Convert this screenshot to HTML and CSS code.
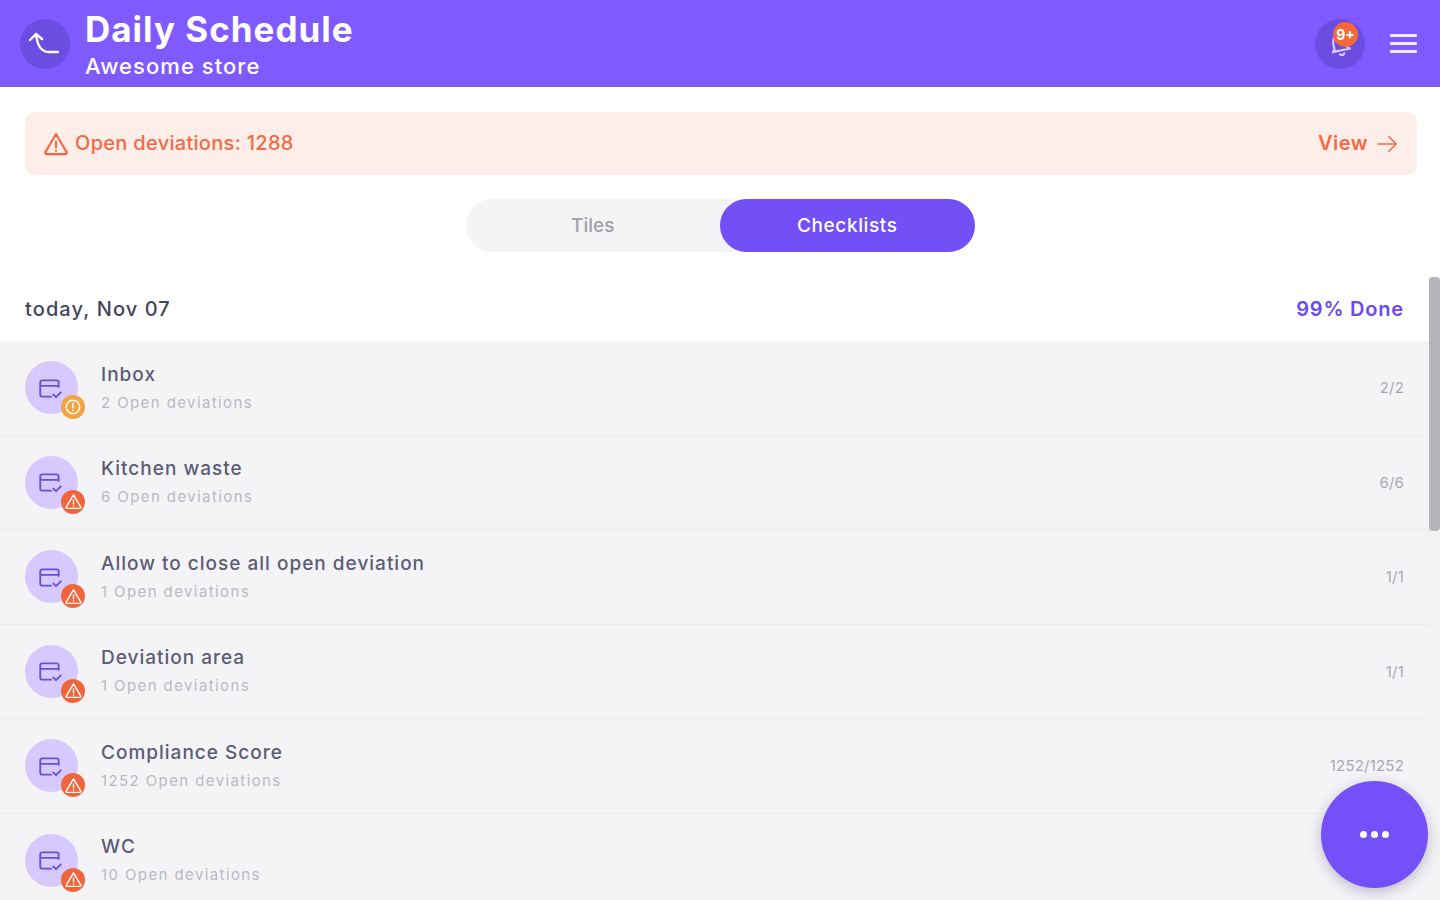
FILE: index.html
```html
<!DOCTYPE html>
<html lang="en">
<head>
  <meta charset="UTF-8">
  <meta name="viewport" content="width=device-width, initial-scale=1.0">
  <title>Daily Schedule</title>
  <link rel="stylesheet" href="styles.css">
</head>
<body>
  <svg class="defs" width="0" height="0">
    <symbol id="checklist" viewBox="0 0 24 24">
      <path d="M20 11V7a2 2 0 0 0-2-2H5a2 2 0 0 0-2 2v11a2 2 0 0 0 2 2h8M3 10h17M15 18l2.5 2.5L22 16" fill="none" stroke="currentColor" stroke-width="1.7" stroke-linecap="round" stroke-linejoin="round"/>
    </symbol>
    <symbol id="warning" viewBox="0 0 24 24">
      <path d="M12 3.5 2.8 19.2a1 1 0 0 0 .9 1.5h16.6a1 1 0 0 0 .9-1.5zM12 10v5M12 17.6v.4" fill="none" stroke="currentColor" stroke-width="1.8" stroke-linecap="round" stroke-linejoin="round"/>
    </symbol>
  </svg>

  <header class="topbar">
    <button class="round-btn back">
      <svg width="32" height="32" viewBox="0 0 32 32"><path d="M1 12l6-6 6 5M7 6c1 10 5 18 13 18h9" fill="none" stroke="#fff" stroke-width="2.400" stroke-linecap="round" stroke-linejoin="round"/></svg>
    </button>
    <div class="titles">
      <h1>Daily Schedule</h1>
      <p>Awesome store</p>
    </div>
    <button class="round-btn bell">
      <svg class="bell-icon" width="26" height="26" viewBox="0 0 24 24"><path d="M6 16V10a6 6 0 0 1 12 0v6l2 2H4zM10 20.500a2 2 0 0 0 4 0" fill="none" stroke="#d9ccff" stroke-width="2" stroke-linejoin="round"/></svg>
      <span class="count">9+</span>
    </button>
    <button class="menu"><span></span><span></span><span></span></button>
  </header>

  <div class="alert">
    <svg class="alert-icon" width="28" height="28"><use href="#warning"/></svg>
    <span class="alert-text">Open deviations: 1288</span>
    <span class="alert-view">View</span>
    <svg width="22" height="22" viewBox="0 0 24 24"><path d="M2 12h20M14 4l8 8-8 8" fill="none" stroke="currentColor" stroke-width="1.600" stroke-linecap="round" stroke-linejoin="round"/></svg>
  </div>

  <div class="toggle">
    <button class="toggle-item">Tiles</button>
    <button class="toggle-item active">Checklists</button>
  </div>

  <main class="content">
    <div class="day-row">
      <span class="day">today, Nov 07</span>
      <span class="done">99% Done</span>
    </div>

    <div class="row">
      <div class="avatar"><svg width="26" height="26"><use href="#checklist"/></svg><span class="badge orange"><svg width="18" height="18" viewBox="0 0 24 24"><circle cx="12" cy="12" r="9" fill="none" stroke="#fff" stroke-width="2"/><path d="M12 7v6M12 16v1" stroke="#fff" stroke-width="2" stroke-linecap="round"/></svg></span></div>
      <div class="info"><div class="name">Inbox</div><div class="sub">2 Open deviations</div></div>
      <div class="ratio">2/2</div>
    </div>
    <div class="row">
      <div class="avatar"><svg width="26" height="26"><use href="#checklist"/></svg><span class="badge"><svg width="19" height="19"><use href="#warning"/></svg></span></div>
      <div class="info"><div class="name">Kitchen waste</div><div class="sub">6 Open deviations</div></div>
      <div class="ratio">6/6</div>
    </div>
    <div class="row">
      <div class="avatar"><svg width="26" height="26"><use href="#checklist"/></svg><span class="badge"><svg width="19" height="19"><use href="#warning"/></svg></span></div>
      <div class="info"><div class="name">Allow to close all open deviation</div><div class="sub">1 Open deviations</div></div>
      <div class="ratio">1/1</div>
    </div>
    <div class="row">
      <div class="avatar"><svg width="26" height="26"><use href="#checklist"/></svg><span class="badge"><svg width="19" height="19"><use href="#warning"/></svg></span></div>
      <div class="info"><div class="name">Deviation area</div><div class="sub">1 Open deviations</div></div>
      <div class="ratio">1/1</div>
    </div>
    <div class="row">
      <div class="avatar"><svg width="26" height="26"><use href="#checklist"/></svg><span class="badge"><svg width="19" height="19"><use href="#warning"/></svg></span></div>
      <div class="info"><div class="name">Compliance Score</div><div class="sub">1252 Open deviations</div></div>
      <div class="ratio">1252/1252</div>
    </div>
    <div class="row">
      <div class="avatar"><svg width="26" height="26"><use href="#checklist"/></svg><span class="badge"><svg width="19" height="19"><use href="#warning"/></svg></span></div>
      <div class="info"><div class="name">WC</div><div class="sub">10 Open deviations</div></div>
      <div class="ratio">10/10</div>
    </div>

    <div class="scroll-track"><div class="scroll-thumb"></div></div>
  </main>

  <button class="fab"><span></span><span></span><span></span></button>
</body>
</html>
```

FILE: styles.css
```css
* {
  box-sizing: border-box;
}

body {
  font-family: Inter, "Open Sans", sans-serif;
  background-color: #fff;
  margin: 0;
  height: 100vh;
  overflow: hidden;
  color: #4a4a68;
}

button {
  font-family: inherit;
  border: none;
  padding: 0;
  cursor: pointer;
}

.defs {
  position: absolute;
}

.topbar {
  background-color: #7f5aff;
  height: 87px;
  display: flex;
  align-items: center;
  padding: 0 23px 0 20px;
}

.round-btn {
  width: 50px;
  height: 50px;
  border-radius: 50%;
  background-color: #6c4de2;
  display: flex;
  align-items: center;
  justify-content: center;
  position: relative;
}

.titles {
  margin-left: 15px;
  flex: 1;
  color: #fff;
}

.titles h1 {
  font-size: 35px;
  line-height: 42px;
  font-weight: 700;
  letter-spacing: 1px;
  margin: -2px 0 0;
}

.titles p {
  font-size: 22px;
  line-height: 28px;
  font-weight: 500;
  letter-spacing: 1.050px;
  margin: 2px 0 -2px;
}

.bell {
  margin-right: 25px;
}

.bell-icon {
  transform: rotate(-12deg);
}

.count {
  position: absolute;
  top: 3px;
  left: 18px;
  width: 25px;
  height: 25px;
  border-radius: 50%;
  background-color: #f4693a;
  color: #fff;
  font-size: 14px;
  font-weight: 700;
  line-height: 25px;
  text-align: center;
}

.menu {
  width: 27px;
  display: flex;
  flex-direction: column;
  gap: 5px;
  background: none;
}

.menu span {
  height: 3px;
  background-color: #f1edff;
  border-radius: 1px;
}

.alert {
  margin: 25px 23px 0 25px;
  height: 63px;
  background-color: #fdeeea;
  border-radius: 10px;
  display: flex;
  align-items: center;
  padding: 0 19px 0 17px;
  color: #f26a45;
  font-size: 20px;
  font-weight: 500;
}

.alert-text {
  margin-left: 5px;
  flex: 1;
  letter-spacing: 0.300px;
  margin-top: -2px;
}

.alert-view {
  font-weight: 600;
  letter-spacing: 0.500px;
  margin-right: 8px;
  margin-top: -2px;
}

.toggle {
  width: 509px;
  height: 53px;
  margin: 24px auto 0;
  background-color: #f4f4f6;
  border-radius: 27px;
  display: flex;
}

.toggle-item {
  flex: 1;
  background: none;
  border-radius: 27px;
  font-size: 19px;
  font-weight: 500;
  color: #a0a0a8;
}

.toggle-item.active {
  background-color: #7350f5;
  color: #fff;
  letter-spacing: 0.600px;
}

.content {
  position: relative;
  margin-top: 25px;
}

.day-row {
  height: 64px;
  padding: 0 25px;
  margin-right: 11px;
  display: flex;
  justify-content: space-between;
  align-items: center;
  font-size: 20px;
  font-weight: 500;
}

.day {
  color: #45455a;
  letter-spacing: 1.100px;
}

.done {
  color: #6a48f2;
  font-weight: 600;
  letter-spacing: 0.800px;
}

.row {
  height: 94.500px;
  margin-right: 11px;
  padding: 0 25px;
  background-color: #f4f4f7;
  border-bottom: 1px solid #ebebef;
  display: flex;
  align-items: center;
}

.avatar {
  width: 53px;
  height: 53px;
  border-radius: 50%;
  background-color: #d6c9fd;
  color: #6a4fd8;
  display: flex;
  align-items: center;
  justify-content: center;
  position: relative;
}

.avatar > svg {
  margin-left: -3px;
}

.badge {
  position: absolute;
  left: 36px;
  top: 34px;
  width: 24px;
  height: 24px;
  border-radius: 50%;
  background-color: #f2653c;
  color: #fff;
  display: flex;
  align-items: center;
  justify-content: center;
}

.badge.orange {
  background-color: #f4a340;
}

.info {
  margin-left: 23px;
  flex: 1;
}

.name {
  font-size: 19px;
  line-height: 24px;
  font-weight: 500;
  letter-spacing: 1px;
  color: #5c5c74;
}

.sub {
  margin-top: 6px;
  font-size: 15px;
  line-height: 20px;
  letter-spacing: 1.400px;
  color: #b9b9c4;
}

.ratio {
  font-size: 15px;
  letter-spacing: 0.200px;
  color: #a9a9b4;
}

.scroll-track {
  position: absolute;
  top: 0;
  right: 0;
  bottom: 0;
  width: 11px;
  background-color: #f3f3f3;
}

.scroll-thumb {
  height: 254px;
  background-color: #b4b4b9;
  border-radius: 4px;
}

.fab {
  position: fixed;
  left: 1321px;
  top: 781px;
  width: 107px;
  height: 107px;
  border-radius: 50%;
  background-color: #7350f8;
  box-shadow: 0 4px 14px rgba(60, 50, 90, 0.3);
  display: flex;
  align-items: center;
  justify-content: center;
  gap: 4px;
}

.fab span {
  width: 7px;
  height: 7px;
  border-radius: 50%;
  background-color: #fff;
}
```
